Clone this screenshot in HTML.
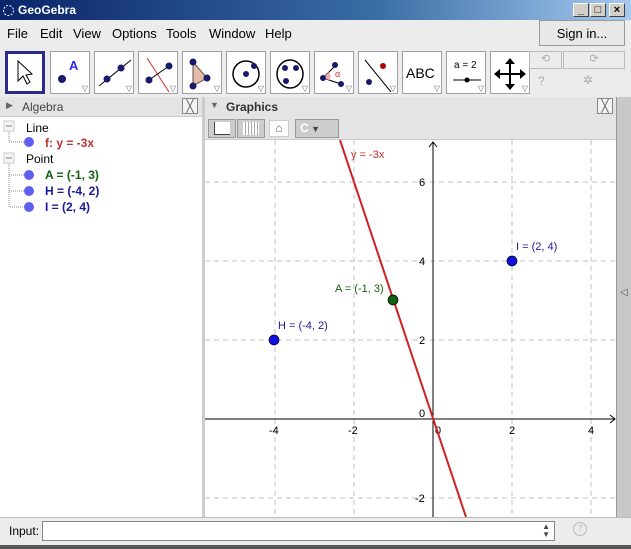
<!DOCTYPE html>
<html><head><style>
*{margin:0;padding:0;box-sizing:border-box}
body{width:631px;height:549px;overflow:hidden;background:#d4d0c8;font-family:"Liberation Sans",sans-serif;font-size:12px;position:relative}
.a{position:absolute}
.title{left:0;top:0;width:631px;height:20px;background:linear-gradient(90deg,#0a246a,#3a6ea5 60%,#a6caf0);color:#fff;font-weight:bold;font-size:12px;line-height:20px;padding-left:18px}
.wb{top:3px;width:16px;height:14px;background:#d4d0c8;border:1px solid;border-color:#fff #404040 #404040 #fff;color:#000;font-size:11px;text-align:center;line-height:12px;font-weight:bold}
.menu{top:20px;left:0;width:631px;height:27px;background:#ececec}
.menu span{position:absolute;top:6px;font-size:13px}
.tb{top:47px;left:0;width:631px;height:50px;background:#ececec}
.tool{position:absolute;top:51px;width:40px;height:43px;background:#fff;border:1px solid #a0a0a0;overflow:hidden}
.tri{position:absolute;right:1px;bottom:0;font-size:8px;color:#666}
</style></head><body>
<div class="a title">GeoGebra</div>
<svg class="a" style="left:2px;top:4px" width="13" height="13"><circle cx="6.5" cy="6.5" r="5" fill="none" stroke="#fff" stroke-dasharray="2 1.5"/></svg>
<div class="a wb" style="left:573px">_</div><div class="a wb" style="left:590px">□</div><div class="a wb" style="left:609px">×</div>
<div class="a menu"><span style="left:7px">File</span><span style="left:40px">Edit</span><span style="left:73px">View</span><span style="left:112px">Options</span><span style="left:166px">Tools</span><span style="left:209px">Window</span><span style="left:265px">Help</span></div>
<div class="a" style="left:539px;top:20px;width:86px;height:26px;border:1px solid #999;background:#e8e8e8;font-size:13px;text-align:center;line-height:25px">Sign in...</div>
<div class="a tb"></div>
<div class="tool" style="left:5px;border:3px solid #2a2a8a"><svg width="36" height="38"><path d="M10 7 L10 27 L15 22 L19 30 L22 28 L18 21 L24 20 Z" fill="#fff" stroke="#000"/></svg></div>
<div class="tool" style="left:50px"><svg width="40" height="40"><circle cx="11" cy="27" r="4" fill="#1a1a6a"/><text x="18" y="18" font-size="13" font-weight="bold" fill="#2a2aee" font-family="Liberation Sans">A</text></svg><span class="tri">▽</span></div>
<div class="tool" style="left:94px"><svg width="40" height="40"><line x1="4" y1="34" x2="36" y2="8" stroke="#000"/><circle cx="12" cy="27" r="3.5" fill="#1a1a6a"/><circle cx="26" cy="16" r="3.5" fill="#1a1a6a"/></svg><span class="tri">▽</span></div>
<div class="tool" style="left:138px"><svg width="40" height="40"><line x1="8" y1="6" x2="30" y2="40" stroke="#c33"/><line x1="10" y1="28" x2="30" y2="14" stroke="#000"/><circle cx="10" cy="28" r="3.5" fill="#1a1a6a"/><circle cx="30" cy="14" r="3.5" fill="#1a1a6a"/></svg><span class="tri">▽</span></div>
<div class="tool" style="left:182px"><svg width="40" height="40"><path d="M10 10 L24 26 L10 34 Z" fill="#e8b8a8" stroke="#555"/><circle cx="10" cy="10" r="3.5" fill="#1a1a6a"/><circle cx="24" cy="26" r="3.5" fill="#1a1a6a"/><circle cx="10" cy="34" r="3.5" fill="#1a1a6a"/></svg><span class="tri">▽</span></div>
<div class="tool" style="left:226px"><svg width="40" height="40"><circle cx="19" cy="22" r="13" fill="none" stroke="#000" stroke-width="1.5"/><circle cx="19" cy="22" r="3" fill="#1a1a6a"/><circle cx="27" cy="14" r="3" fill="#1a1a6a"/></svg><span class="tri">▽</span></div>
<div class="tool" style="left:270px"><svg width="40" height="40"><ellipse cx="19" cy="22" rx="13" ry="14" fill="none" stroke="#000" stroke-width="1.5"/><circle cx="14" cy="16" r="3" fill="#1a1a6a"/><circle cx="25" cy="16" r="3" fill="#1a1a6a"/><circle cx="15" cy="29" r="3" fill="#1a1a6a"/></svg><span class="tri">▽</span></div>
<div class="tool" style="left:314px"><svg width="40" height="40"><path d="M8 26 L20 14 M8 26 L26 32" stroke="#000"/><path d="M8 26 L14 20 Q17 26 14 28Z" fill="#f0b0b0"/><circle cx="20" cy="13" r="3" fill="#1a1a6a"/><circle cx="8" cy="26" r="3" fill="#1a1a6a"/><circle cx="26" cy="32" r="3" fill="#1a1a6a"/><text x="20" y="25" font-size="9" fill="#c33">α</text></svg><span class="tri">▽</span></div>
<div class="tool" style="left:358px"><svg width="40" height="40"><line x1="6" y1="8" x2="32" y2="40" stroke="#000"/><circle cx="10" cy="30" r="3" fill="#1a1a6a"/><circle cx="24" cy="14" r="3" fill="#a00"/></svg><span class="tri">▽</span></div>
<div class="tool" style="left:402px"><span style="position:absolute;left:3px;top:13px;font-size:14px">ABC</span><span class="tri">▽</span></div>
<div class="tool" style="left:446px"><span style="position:absolute;left:7px;top:8px;font-size:10px">a = 2</span><svg width="40" height="40"><line x1="6" y1="28" x2="34" y2="28" stroke="#000"/><circle cx="20" cy="28" r="2.5" fill="#000"/></svg><span class="tri">▽</span></div>
<div class="tool" style="left:490px"><svg width="40" height="40"><path d="M19 8 L19 36 M5 22 L33 22" stroke="#000" stroke-width="2"/><path d="M19 6 L14 12 L24 12Z M19 38 L14 32 L24 32Z M3 22 L9 17 L9 27Z M35 22 L29 17 L29 27Z" fill="#000"/></svg><span class="tri">▽</span></div>
<div class="a" style="left:529px;top:51px;width:33px;height:18px;border:1px solid #bbb;color:#aaa;text-align:center;font-size:11px">⟲</div>
<div class="a" style="left:563px;top:51px;width:62px;height:18px;border:1px solid #bbb;color:#aaa;text-align:center;font-size:11px">⟳</div>
<div class="a" style="left:538px;top:74px;color:#aaa;font-size:12px">?</div>
<div class="a" style="left:583px;top:73px;color:#aaa;font-size:12px">✲</div>
<!-- algebra -->
<div class="a" style="left:0;top:97px;width:202px;height:20px;background:#e4e4e4;border-bottom:1px solid #ccc"><span style="position:absolute;left:6px;top:3px;color:#666;font-size:9px">▶</span><span style="position:absolute;left:22px;top:3px;color:#444">Algebra</span><div style="position:absolute;left:182px;top:1px;width:16px;height:16px;border:1px solid #888;background:#f4f4f4;text-align:center;line-height:14px;color:#666">╳</div></div>
<div class="a" style="left:0;top:117px;width:202px;height:400px;background:#fff;font-size:12px">
<svg class="a" style="left:0;top:0" width="40" height="100"><rect x="4" y="4" width="10" height="10" fill="#f4f4f4" stroke="#ccc"/><line x1="6" y1="9" x2="12" y2="9" stroke="#888"/><rect x="4" y="36" width="10" height="10" fill="#f4f4f4" stroke="#ccc"/><line x1="6" y1="41" x2="12" y2="41" stroke="#888"/><path d="M9 15 V25 H24 M9 47 V90 H24 M9 58 H24 M9 74 H24" stroke="#888" stroke-dasharray="1 1" fill="none"/><circle cx="29" cy="25" r="5" fill="#6060f0"/><circle cx="29" cy="58" r="5" fill="#6060f0"/><circle cx="29" cy="74" r="5" fill="#6060f0"/><circle cx="29" cy="90" r="5" fill="#6060f0"/></svg>
<div class="a" style="left:26px;top:4px">Line</div><div class="a" style="left:45px;top:19px;color:#c03030;font-weight:bold">f: y = -3x</div>
<div class="a" style="left:26px;top:35px">Point</div>
<div class="a" style="left:45px;top:51px;color:#106010;font-weight:bold">A = (-1, 3)</div>
<div class="a" style="left:45px;top:67px;color:#1a1a9a;font-weight:bold">H = (-4, 2)</div>
<div class="a" style="left:45px;top:83px;color:#1a1a9a;font-weight:bold">I = (2, 4)</div>
</div>
<div class="a" style="left:202px;top:97px;width:3px;height:420px;background:#ccc"></div>
<!-- graphics -->
<div class="a" style="left:205px;top:97px;width:411px;height:20px;background:#e4e4e4"><span style="position:absolute;left:5px;top:3px;color:#666;font-size:9px">▼</span><span style="position:absolute;left:21px;top:3px;color:#333;font-weight:bold">Graphics</span><div style="position:absolute;left:392px;top:1px;width:16px;height:16px;border:1px solid #888;background:#f4f4f4;text-align:center;line-height:14px;color:#666">╳</div></div>
<div class="a" style="left:205px;top:117px;width:411px;height:23px;background:#e4e4e4;border-bottom:1px solid #ccc">
<div style="position:absolute;left:3px;top:2px;width:28px;height:19px;background:#ccc;border:1px solid #999"><div style="margin:2px 5px;width:16px;height:13px;background:#fff;border-left:1px solid #444;border-bottom:1px solid #444"></div></div>
<div style="position:absolute;left:32px;top:2px;width:28px;height:19px;background:#ccc;border:1px solid #999"><div style="margin:2px 5px;width:16px;height:13px;background:repeating-linear-gradient(90deg,#fff 0 2px,#aaa 2px 3px)"></div></div>
<div style="position:absolute;left:64px;top:3px;width:20px;height:17px;background:#fff;border:1px solid #ccc;text-align:center;color:#666;font-size:12px">⌂</div>
<div style="position:absolute;left:90px;top:2px;width:44px;height:19px;background:#ccc;border:1px solid #999;font-weight:bold;color:#fff;padding-left:4px;line-height:17px">C<span style="color:#444;font-size:9px"> ▼</span></div>
</div>
<svg class="a" style="left:205px;top:140px" width="411" height="377" font-family="Liberation Sans" font-size="11">
<rect width="411" height="377" fill="#fff"/>
<g stroke="#c0c0c0" stroke-dasharray="5 4"><line x1="70" y1="0" x2="70" y2="377"/><line x1="149" y1="0" x2="149" y2="377"/><line x1="307" y1="0" x2="307" y2="377"/><line x1="386" y1="0" x2="386" y2="377"/><line x1="0" y1="42" x2="411" y2="42"/><line x1="0" y1="121" x2="411" y2="121"/><line x1="0" y1="200" x2="411" y2="200"/><line x1="0" y1="358" x2="411" y2="358"/></g>
<line x1="228" y1="2" x2="228" y2="377" stroke="#000"/><line x1="0" y1="279" x2="410" y2="279" stroke="#000"/>
<path d="M224 7 L228 2 L232 7 M405 275 L410 279 L405 283" fill="none" stroke="#000"/>
<g fill="#000"><text x="64" y="294">-4</text><text x="143" y="294">-2</text><text x="230" y="294">0</text><text x="304" y="294">2</text><text x="383" y="294">4</text><text x="214" y="46">6</text><text x="214" y="125">4</text><text x="214" y="204">2</text><text x="214" y="277">0</text><text x="210" y="362">-2</text></g>
<line x1="135" y1="0" x2="261" y2="377" stroke="#d02020" stroke-width="2"/>
<text x="146" y="18" fill="#c03030">y = -3x</text>
<circle cx="307" cy="121" r="5" fill="#1010e0" stroke="#000" stroke-width=".7"/><text x="311" y="110" fill="#1a1a9a">I = (2, 4)</text>
<circle cx="188" cy="160" r="5" fill="#106010" stroke="#000" stroke-width=".7"/><text x="130" y="152" fill="#106010">A = (-1, 3)</text>
<circle cx="69" cy="200" r="5" fill="#1010e0" stroke="#000" stroke-width=".7"/><text x="73" y="189" fill="#1a1a9a">H = (-4, 2)</text>
</svg>
<div class="a" style="left:616px;top:97px;width:15px;height:420px;background:#c8c8c8;border-left:1px solid #999"><span style="position:absolute;left:3px;top:190px;font-size:10px;color:#555">◁</span></div>
<!-- input -->
<div class="a" style="left:0;top:517px;width:631px;height:28px;background:#ececec;border-top:1px solid #bbb"></div>
<div class="a" style="left:9px;top:524px;font-size:12px">Input:</div>
<div class="a" style="left:42px;top:521px;width:513px;height:20px;background:#fff;border:1px solid #888"><span style="position:absolute;right:4px;top:1px;font-size:8px;line-height:8px;color:#444">▲<br>▼</span></div>
<div class="a" style="left:573px;top:522px;width:14px;height:14px;border:1px solid #bbb;border-radius:50%;color:#bbb;font-size:9px;text-align:center">?</div>
<div class="a" style="left:0;top:545px;width:631px;height:4px;background:#555"></div>
</body></html>
